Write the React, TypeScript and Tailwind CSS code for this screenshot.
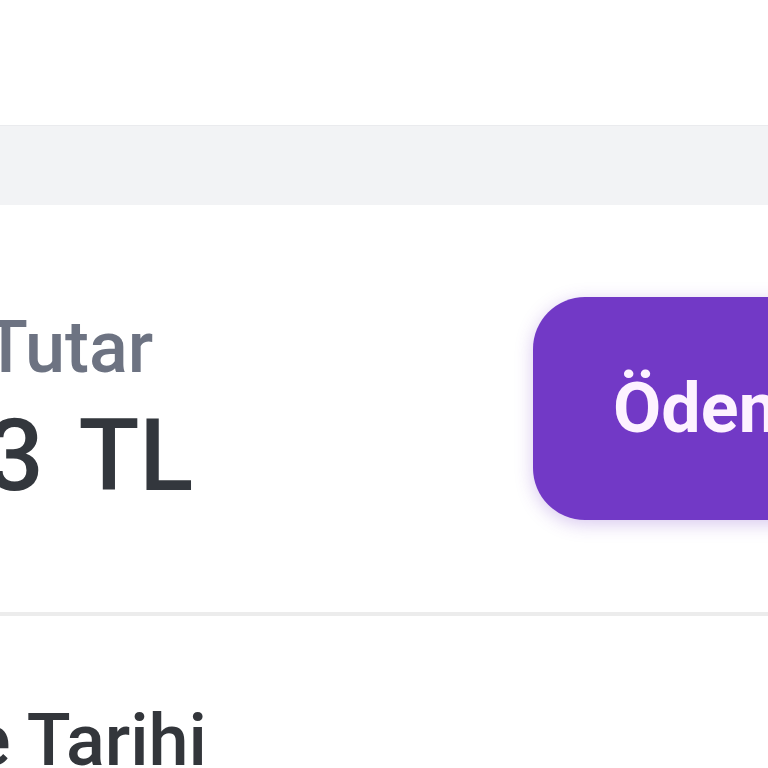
export default function App() {
  return (
    <div className="w-[768px] h-[768px] overflow-hidden bg-white font-['Roboto',sans-serif]">
      {/* header area */}
      <div className="h-[125px] bg-white" />
      {/* gray band */}
      <div className="h-[80px] bg-[#f2f3f5] border-t border-[#eaebee]" />

      {/* total + pay button */}
      <section className="h-[407px] flex items-center overflow-hidden">
        <div className="w-[533px] shrink-0 flex flex-col gap-[22px]">
          <span className="-ml-[16px] text-[72px] leading-[72px] font-medium text-[#6d7382]">
            Tutar
          </span>
          <span className="-ml-[13px] text-[100px] leading-[100px] font-medium text-[#33373d] [word-spacing:12px]">
            3 TL
          </span>
        </div>
        <button className="shrink-0 w-[380px] h-[223px] rounded-[52px] bg-[#7239c6] shadow-[0_4px_18px_rgba(114,57,198,0.28)] flex items-start pt-[76px] pl-[80px]">
          <span className="text-[70px] leading-[70px] font-bold text-[#fdf2ff]">Ödeme</span>
        </button>
      </section>

      {/* next row */}
      <section className="border-t-4 border-[#ececec] pt-[89px]">
        <span className="block -ml-[28px] text-[72px] leading-[72px] font-medium text-[#33363b] whitespace-nowrap">
          e Tarihi
        </span>
      </section>
    </div>
  );
}
